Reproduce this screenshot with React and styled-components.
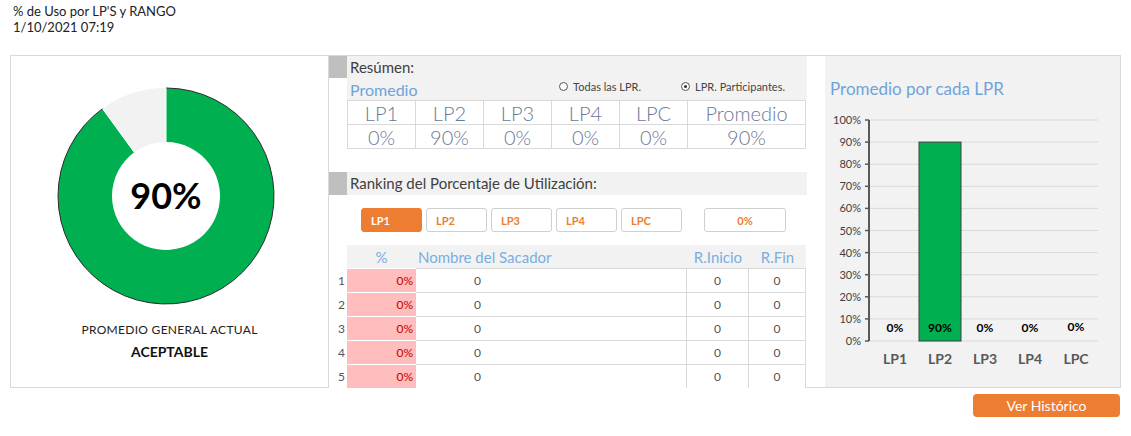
import React from "react";
import styled, { createGlobalStyle } from "styled-components";

const GlobalStyle = createGlobalStyle`
  body {
    margin: 0;
    background: #fff;
    font-family: Lato, "Open Sans", sans-serif;
    color: #333;
  }
`;

const Page = styled.div`
  width: 1131px;
  height: 436px;
  overflow: hidden;
`;

const Heading = styled.div`
  padding: 3px 0 0 13px;
  height: 55px;
  box-sizing: border-box;
  font-size: 13px;
  line-height: 16px;
  color: #222;
`;

const Frame = styled.div`
  margin-left: 10px;
  width: 1111px;
  height: 333px;
  box-sizing: border-box;
  border: 1px solid #d9d9d9;
  display: flex;
`;

const LeftPanel = styled.div`
  width: 318px;
  box-sizing: border-box;
  border-right: 1px solid #d9d9d9;
  display: flex;
  flex-direction: column;
  align-items: center;
`;

const DonutWrap = styled.div`
  margin: 30px 7px 0 0;
  width: 220px;
  height: 220px;
`;

const Caption = styled.div`
  margin-top: 16px;
  font-size: 12px;
  color: #222;
  letter-spacing: 0.3px;
`;

const Verdict = styled.div`
  margin-top: 6px;
  font-size: 14px;
  font-weight: 700;
  color: #111;
`;

const Middle = styled.div`
  width: 478px;
  display: flex;
  flex-direction: column;
`;

const SummaryHead = styled.div`
  display: grid;
  grid-template-columns: 18px 1fr;
  height: 44px;
`;

const Marker = styled.div`
  background: #bfbfbf;
  height: ${(p) => p.h}px;
`;

const HeadBody = styled.div`
  background: #f2f2f2;
  padding-left: 3px;
`;

const HeadTitle = styled.div`
  font-size: 15px;
  line-height: 22px;
  color: #404040;
`;

const PromRow = styled.div`
  display: flex;
  align-items: center;
  height: 22px;
`;

const BlueLabel = styled.div`
  font-size: ${(p) => p.size || 16}px;
  color: #6fa3dc;
  flex: 1;
`;

const Radio = styled.label`
  display: flex;
  align-items: center;
  gap: 5px;
  font-size: 11px;
  color: #444;
  margin-right: ${(p) => p.mr}px;
  margin-top: -6px;
`;

const RadioDot = styled.span`
  width: 7px;
  height: 7px;
  border-radius: 50%;
  border: 1px solid #555;
  background: #fff;
  display: inline-flex;
  align-items: center;
  justify-content: center;
  &::after {
    content: "";
    width: 3px;
    height: 3px;
    border-radius: 50%;
    background: ${(p) => (p.checked ? "#333" : "transparent")};
  }
`;

const SummaryTable = styled.div`
  margin-left: 18px;
  width: 459px;
  display: grid;
  grid-template-columns: 68px 68px 68px 68px 68px 1fr;
  border-top: 1px solid #d9d9d9;
  border-left: 1px solid #d9d9d9;
  box-sizing: border-box;
`;

const SumCell = styled.div`
  height: 23px;
  border-right: 1px solid #d9d9d9;
  border-bottom: 1px solid #d9d9d9;
  display: flex;
  align-items: center;
  justify-content: center;
  font-size: 20px;
  font-weight: 300;
  color: #6b7896;
`;

const RankHead = styled.div`
  margin-top: 23px;
  display: grid;
  grid-template-columns: 18px 1fr;
  height: 23px;
`;

const ButtonRow = styled.div`
  display: flex;
  gap: 4px;
  padding: 13px 0 0 32px;
  height: 37px;
  box-sizing: border-box;
`;

const LpButton = styled.div`
  width: ${(p) => p.w || 61}px;
  height: 24px;
  box-sizing: border-box;
  border-radius: 3px;
  border: 1px solid ${(p) => (p.active ? "#ed7d31" : "#cfcfcf")};
  background: ${(p) => (p.active ? "#ed7d31" : "#fff")};
  color: ${(p) => (p.active ? "#fff" : "#ed7d31")};
  font-size: 11px;
  font-weight: 700;
  display: flex;
  align-items: center;
  justify-content: ${(p) => (p.center ? "center" : "flex-start")};
  padding-left: ${(p) => (p.center ? 0 : 9)}px;
  margin-left: ${(p) => p.ml || 0}px;
`;

const RankTable = styled.div`
  margin-top: 13px;
  display: grid;
  grid-template-columns: 18px 69px 271px 62px 57px;
`;

const HeadCell = styled.div`
  height: 23px;
  background: ${(p) => (p.blank ? "#fff" : "#f2f2f2")};
  font-size: 15px;
  color: #7aaee0;
  display: flex;
  align-items: center;
  justify-content: ${(p) => p.align || "center"};
  padding-left: ${(p) => p.pl || 0}px;
`;

const Cell = styled.div`
  height: 24px;
  box-sizing: border-box;
  border-top: 1px solid ${(p) => (p.pink ? "#fff" : p.num ? "transparent" : "#d9d9d9")};
  border-right: ${(p) => (p.vline ? "1px solid #d9d9d9" : "none")};
  background: ${(p) => (p.pink ? "#ffbdbd" : "#fff")};
  color: ${(p) => (p.pink ? "#c00000" : "#555")};
  font-size: 12px;
  display: flex;
  align-items: center;
  justify-content: ${(p) => p.align || "center"};
  padding: 0 ${(p) => p.pr || 0}px 0 ${(p) => p.pl || 0}px;
`;

const Spacer = styled.div`
  width: 18px;
`;

const ChartPanel = styled.div`
  flex: 1;
  background: #f2f2f2;
  padding: 22px 0 0 5px;
  box-sizing: border-box;
`;

const ChartTitle = styled.div`
  font-size: 17px;
  color: #6fa3dc;
  height: 30px;
`;

const Footer = styled.div`
  display: flex;
  justify-content: flex-end;
  padding: 6px 11px 0 0;
`;

const HistoryButton = styled.div`
  width: 147px;
  height: 23px;
  border-radius: 4px;
  background: #ed7d31;
  color: #fff;
  font-size: 14px;
  display: flex;
  align-items: center;
  justify-content: center;
`;

const Donut = () => (
  <svg width="220" height="220" viewBox="0 0 220 220">
    <path
      d="M110 2 A108 108 0 1 1 46.52 22.63 L78.26 66.31 A54 54 0 1 0 110 56 Z"
      fill="#00b050"
    />
    <path
      d="M46.52 22.63 A108 108 0 0 1 110 2 L110 56 A54 54 0 0 0 78.26 66.31 Z"
      fill="#f2f2f2"
    />
    <path
      d="M110 2 A108 108 0 1 1 46.52 22.63"
      fill="none"
      stroke="#2b2b2b"
      strokeWidth="1"
    />
    <line x1="110" y1="2" x2="110" y2="56" stroke="#fff" strokeWidth="1" />
    <line x1="46.52" y1="22.63" x2="78.26" y2="66.31" stroke="#fff" strokeWidth="1" />
    <text
      x="110"
      y="123"
      textAnchor="middle"
      fontSize="36"
      fontWeight="700"
      fill="#000"
      fontFamily="Lato, sans-serif"
    >
      90%
    </text>
  </svg>
);

const bars = [
  { name: "LP1", value: 0, x: 70 },
  { name: "LP2", value: 90, x: 115 },
  { name: "LP3", value: 0, x: 160 },
  { name: "LP4", value: 0, x: 205 },
  { name: "LPC", value: 0, x: 251 },
];

const BarChart = () => {
  const top = 12;
  const base = 233;
  const step = (base - top) / 10;
  const ticks = Array.from({ length: 11 }, (_, i) => i * 10);
  return (
    <svg width="290" height="270" viewBox="0 0 290 270" style={{ marginLeft: -5 }}>
      {ticks.map((t) => {
        const y = base - (t / 10) * step;
        return (
          <g key={t}>
            <line x1="44" x2="273" y1={y} y2={y} stroke="#d9d9d9" strokeWidth="1" />
            <line x1="40" x2="44" y1={y} y2={y} stroke="#595959" strokeWidth="1.5" />
            <text
              x="36"
              y={y + 4}
              textAnchor="end"
              fontSize="11"
              fill="#404040"
              fontFamily="Lato, sans-serif"
            >
              {t}%
            </text>
          </g>
        );
      })}
      <line x1="44" x2="44" y1={top} y2={base} stroke="#595959" strokeWidth="2" />
      {bars.map((b) => {
        const h = (b.value / 10) * step;
        return (
          <g key={b.name}>
            {b.value > 0 && (
              <rect
                x={b.x - 21}
                y={base - h}
                width="42"
                height={h}
                fill="#00b050"
                stroke="#404040"
                strokeWidth="1"
              />
            )}
            <text
              x={b.x}
              y={b.name === "LPC" ? 223 : 224}
              textAnchor="middle"
              fontSize="12"
              fontWeight="700"
              fill="#000"
              fontFamily="Lato, sans-serif"
            >
              {b.value}%
            </text>
            <text
              x={b.x}
              y={256}
              textAnchor="middle"
              fontSize="14"
              fontWeight="700"
              fill="#595959"
              fontFamily="Lato, sans-serif"
            >
              {b.name}
            </text>
          </g>
        );
      })}
    </svg>
  );
};

const summary = [
  ["LP1", "0%"],
  ["LP2", "90%"],
  ["LP3", "0%"],
  ["LP4", "0%"],
  ["LPC", "0%"],
  ["Promedio", "90%"],
];

const rows = [1, 2, 3, 4, 5];

export default function App() {
  return (
    <Page>
      <GlobalStyle />
      <Heading>
        <div>% de Uso por LP'S y RANGO</div>
        <div>1/10/2021 07:19</div>
      </Heading>
      <Frame>
        <LeftPanel>
          <DonutWrap>
            <Donut />
          </DonutWrap>
          <Caption>PROMEDIO GENERAL ACTUAL</Caption>
          <Verdict>ACEPTABLE</Verdict>
        </LeftPanel>

        <Middle>
          <SummaryHead>
            <Marker h={22} />
            <HeadBody>
              <HeadTitle>Resúmen:</HeadTitle>
              <PromRow>
                <BlueLabel>Promedio</BlueLabel>
                <Radio mr={40}>
                  <RadioDot />
                  Todas las LPR.
                </Radio>
                <Radio mr={22}>
                  <RadioDot checked />
                  LPR. Participantes.
                </Radio>
              </PromRow>
            </HeadBody>
          </SummaryHead>
          <SummaryTable>
            {summary.map(([label]) => (
              <SumCell key={label}>{label}</SumCell>
            ))}
            {summary.map(([label, value]) => (
              <SumCell key={label + "v"}>{value}</SumCell>
            ))}
          </SummaryTable>

          <RankHead>
            <Marker h={23} />
            <HeadBody>
              <HeadTitle>Ranking del Porcentaje de Utilización:</HeadTitle>
            </HeadBody>
          </RankHead>
          <ButtonRow>
            <LpButton active>LP1</LpButton>
            <LpButton>LP2</LpButton>
            <LpButton>LP3</LpButton>
            <LpButton>LP4</LpButton>
            <LpButton>LPC</LpButton>
            <LpButton w={82} ml={18} center>
              0%
            </LpButton>
          </ButtonRow>

          <RankTable>
            <HeadCell blank />
            <HeadCell>%</HeadCell>
            <HeadCell align="flex-start" pl={2}>
              Nombre del Sacador
            </HeadCell>
            <HeadCell>R.Inicio</HeadCell>
            <HeadCell>R.Fin</HeadCell>
            {rows.map((n) => (
              <React.Fragment key={n}>
                <Cell num align="flex-end" pr={2}>
                  {n}
                </Cell>
                <Cell pink align="flex-end" pr={3}>
                  0%
                </Cell>
                <Cell align="flex-start" pl={58} vline>
                  0
                </Cell>
                <Cell vline>0</Cell>
                <Cell vline>0</Cell>
              </React.Fragment>
            ))}
          </RankTable>
        </Middle>

        <Spacer />

        <ChartPanel>
          <ChartTitle>Promedio por cada LPR</ChartTitle>
          <BarChart />
        </ChartPanel>
      </Frame>
      <Footer>
        <HistoryButton>Ver Histórico</HistoryButton>
      </Footer>
    </Page>
  );
}
